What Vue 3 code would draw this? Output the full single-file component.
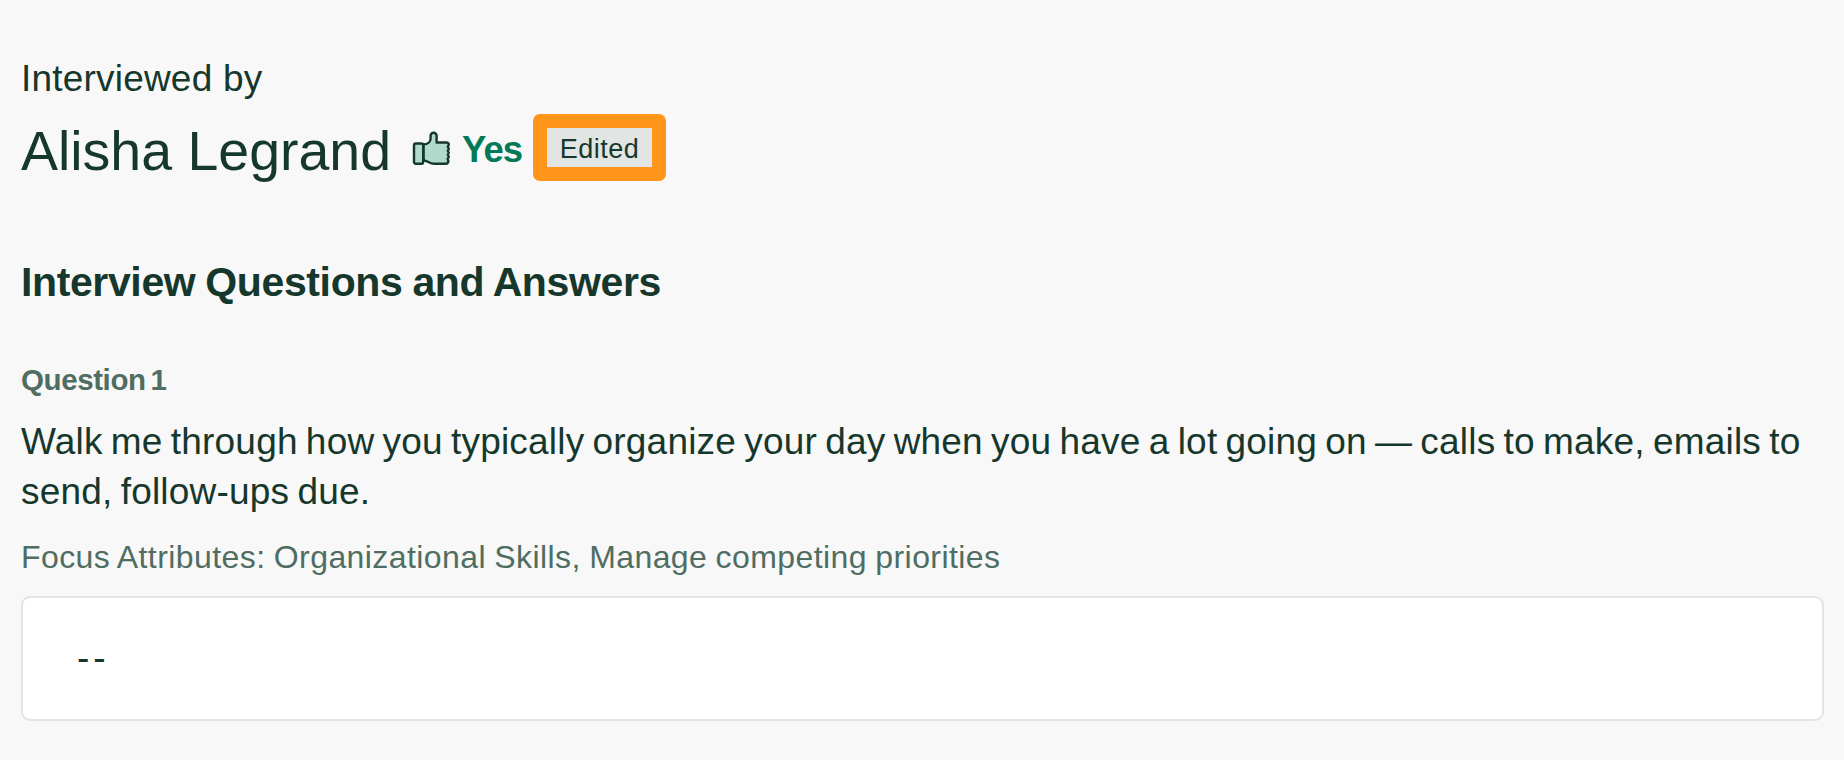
<template>
  <div class="scorecard">
    <div class="interviewed-by">Interviewed by</div>
    <div class="interviewer">
      <span class="name">{{ interview.interviewer }}</span>
      <svg class="thumb" width="40" height="36" viewBox="0 0 40 36">
        <path
          d="M11.5 13.4 C15.8 13.2 18.6 10.8 18.6 7.4 V4.8 a3 3 0 0 1 6 0 V11.5 H34.4 Q36.8 11.5 36.8 13.8 L35.8 15.8 L36.8 17.8 L35.8 19.8 L36.8 21.8 L35.8 23.8 L36.8 25.8 L35.6 27.8 L36.4 30 Q36.2 32.8 33.6 32.8 H22.4 C17 32.8 16 29.6 11.5 29.4 Z"
        />
        <rect x="2" y="12.5" width="9.2" height="20.3" rx="1.8" />
      </svg>
      <span class="rating">{{ interview.rating }}</span>
      <span v-if="interview.edited" class="edited">Edited</span>
    </div>

    <h2 class="section-title">Interview Questions and Answers</h2>

    <div v-for="(item, index) in interview.questions" :key="index" class="question">
      <h3 class="question-number">Question {{ index + 1 }}</h3>
      <p class="question-text">{{ item.text }}</p>
      <p class="attributes">Focus Attributes: {{ item.attributes.join(', ') }}</p>
      <div class="answer">{{ item.answer || '--' }}</div>
    </div>
  </div>
</template>

<script setup>
import { ref } from 'vue';

const interview = ref({
  interviewer: 'Alisha Legrand',
  rating: 'Yes',
  edited: true,
  questions: [
    {
      text: 'Walk me through how you typically organize your day when you have a lot going on — calls to make, emails to send, follow-ups due.',
      attributes: ['Organizational Skills', 'Manage competing priorities'],
      answer: ''
    }
  ]
});
</script>

<style>
body {
  background: #f8f8f8;
}
</style>

<style scoped>
.scorecard {
  box-sizing: border-box;
  min-height: 760px;
  padding: 54px 20px 38px 21px;
  background: #f8f8f8;
  color: #15372c;
  font-family: "Liberation Sans", Arial, sans-serif;
}

.interviewed-by {
  font-size: 37px;
  line-height: 50px;
  letter-spacing: 0.2px;
}

.interviewer {
  display: flex;
  align-items: center;
  height: 67px;
  margin-top: 10px;
}

.name {
  width: 370px;
  padding-top: 6px;
  font-size: 55.5px;
  line-height: 64px;
  letter-spacing: -0.02px;
  white-space: nowrap;
}

.thumb {
  flex: none;
  margin: 2px 0 0 21px;
  fill: #b1d9cc;
  stroke: #15372c;
  stroke-width: 2.4;
  stroke-linejoin: round;
}

.rating {
  width: 61px;
  margin-left: 10px;
  padding-top: 4px;
  color: #047957;
  font-size: 36.5px;
  font-weight: bold;
  line-height: 66px;
  letter-spacing: -0.9px;
}

.edited {
  box-sizing: border-box;
  width: 133px;
  height: 67px;
  margin-left: 10px;
  padding-top: 2px;
  border: 14px solid #ff951a;
  border-radius: 7px;
  background: #e1e5e3;
  font-size: 27px;
  line-height: 38px;
  letter-spacing: 0.5px;
  text-align: center;
}

.section-title {
  margin: 76px 0 0;
  font-size: 41px;
  line-height: 50px;
  letter-spacing: -0.38px;
  word-spacing: -1px;
}

.question-number {
  margin: 53px 0 0;
  color: #4f6d62;
  font-size: 29.5px;
  line-height: 40px;
  letter-spacing: -0.4px;
  word-spacing: -3px;
}

.question-text {
  margin: 17px 0 0;
  font-size: 37px;
  line-height: 50px;
  letter-spacing: 0.2px;
  word-spacing: -2.3px;
}

.attributes {
  margin: 20px 0 0;
  color: #4f6d62;
  font-size: 32px;
  line-height: 40px;
  letter-spacing: 0.42px;
  word-spacing: -1px;
}

.answer {
  box-sizing: border-box;
  height: 125px;
  margin-top: 19px;
  padding: 35px 54px;
  border: 2px solid #e1e5e3;
  border-radius: 9px;
  background: #fff;
  font-size: 37px;
  line-height: 50px;
  letter-spacing: 4px;
}
</style>
